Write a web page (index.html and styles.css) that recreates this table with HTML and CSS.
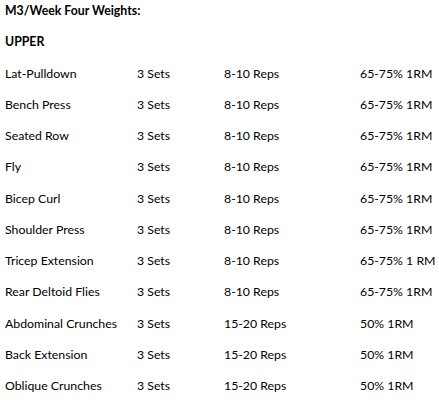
FILE: index.html
```html
<!DOCTYPE html>
<html>
<head>
<meta charset="utf-8">
<link rel="stylesheet" href="styles.css">
</head>
<body>
<div class="sheet">
  <div class="heading">M3/Week Four Weights:</div>
  <div class="heading">UPPER</div>
  <div class="row"><span>Lat-Pulldown</span><span>3 Sets</span><span>8-10 Reps</span><span>65-75% 1RM</span></div>
  <div class="row"><span>Bench Press</span><span>3 Sets</span><span>8-10 Reps</span><span>65-75% 1RM</span></div>
  <div class="row"><span>Seated Row</span><span>3 Sets</span><span>8-10 Reps</span><span>65-75% 1RM</span></div>
  <div class="row"><span>Fly</span><span>3 Sets</span><span>8-10 Reps</span><span>65-75% 1RM</span></div>
  <div class="row"><span>Bicep Curl</span><span>3 Sets</span><span>8-10 Reps</span><span>65-75% 1RM</span></div>
  <div class="row"><span>Shoulder Press</span><span>3 Sets</span><span>8-10 Reps</span><span>65-75% 1RM</span></div>
  <div class="row"><span>Tricep Extension</span><span>3 Sets</span><span>8-10 Reps</span><span>65-75% 1 RM</span></div>
  <div class="row"><span>Rear Deltoid Flies</span><span>3 Sets</span><span>8-10 Reps</span><span>65-75% 1RM</span></div>
  <div class="row"><span>Abdominal Crunches</span><span>3 Sets</span><span>15-20 Reps</span><span>50% 1RM</span></div>
  <div class="row"><span>Back Extension</span><span>3 Sets</span><span>15-20 Reps</span><span>50% 1RM</span></div>
  <div class="row"><span>Oblique Crunches</span><span>3 Sets</span><span>15-20 Reps</span><span>50% 1RM</span></div>
</div>
</body>
</html>
```
FILE: styles.css
```css
html, body {
  margin: 0;
  padding: 0;
  background: #ffffff;
}
.sheet {
  display: flex;
  flex-direction: column;
  gap: 11.25px;
  padding-left: 5px;
  padding-top: 1px;
  font-family: Lato, "Open Sans", sans-serif;
  font-size: 12.3px;
  line-height: 20px;
  color: #000000;
  white-space: nowrap;
}
.heading {
  font-weight: bold;
}
.row {
  display: grid;
  grid-template-columns: 132px 87px 136px auto;
}
```
